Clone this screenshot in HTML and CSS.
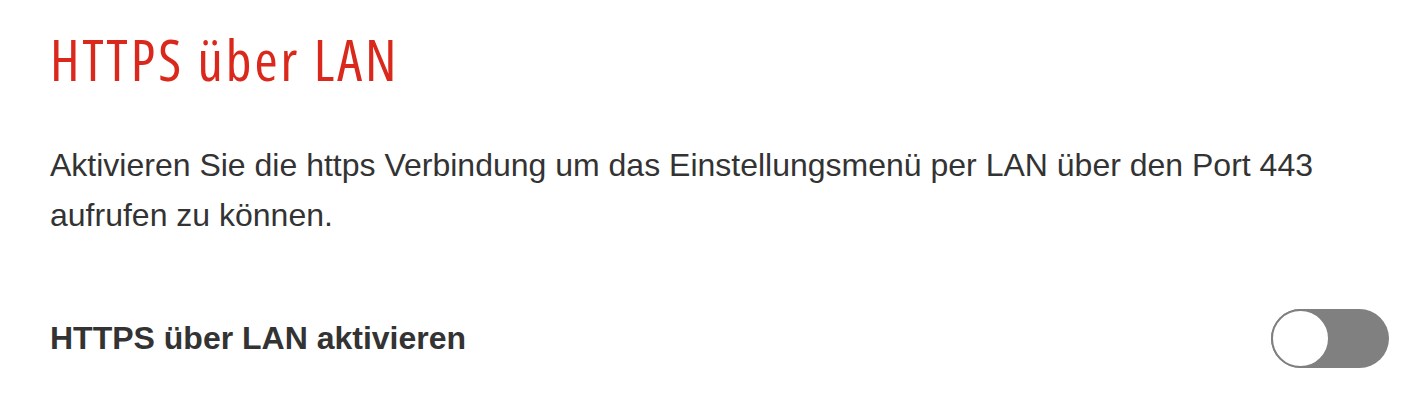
FILE: index.html
```html
<!DOCTYPE html>
<html lang="de">
<head>
    <meta charset="UTF-8">
    <meta name="viewport" content="width=device-width, initial-scale=1.0">
    <title>HTTPS über LAN</title>
    <link rel="stylesheet" href="styles.css">
</head>
<body>
    <div class="panel">
        <h1 class="panel-title">HTTPS über LAN</h1>
        <p class="panel-text">Aktivieren Sie die https Verbindung um das Einstellungsmenü per LAN über den Port 443 aufrufen zu können.</p>
        <div class="setting">
            <span class="setting-label">HTTPS über LAN aktivieren</span>
            <label class="switch">
                <input type="checkbox">
                <span class="slider"></span>
            </label>
        </div>
    </div>
</body>
</html>
```

FILE: styles.css
```css
/* page */
body{
  margin: 0;
  background-color: #fff;
  font-family: "Liberation Sans", Arial, sans-serif;
  color: #333;
}
.panel{
  padding: 27px 33px 0 50px;
}
.panel-title{
  margin: 0;
  font-family: "Open Sans", sans-serif;
  font-stretch: 75%;
  font-weight: 380;
  font-size: 56px;
  line-height: 64px;
  letter-spacing: 3px;
  color: #da291c;
}
.panel-text{
  margin: 49px 0 0;
  font-size: 32px;
  line-height: 50px;
  max-width: 1290px;
}
/* toggle row */
.setting{
  display: flex;
  justify-content: space-between;
  align-items: center;
  margin-top: 69px;
}
.setting-label{
  font-weight: bold;
  font-size: 32px;
}
.switch{
  position: relative;
  display: inline-block;
  width: 118px;
  height: 59px;
}
.switch input{
  opacity: 0;
  width: 0;
  height: 0;
}
.slider{
  position: absolute;
  inset: 0;
  background-color: #808080;
  border-radius: 30px;
  cursor: pointer;
}
.slider::before{
  content: "";
  position: absolute;
  left: 0;
  top: 0;
  width: 55px;
  height: 55px;
  border: 2px solid #808080;
  border-radius: 50%;
  background-color: #fff;
}
.switch input:checked + .slider{
  background-color: #da291c;
}
.switch input:checked + .slider::before{
  left: 59px;
}
```
